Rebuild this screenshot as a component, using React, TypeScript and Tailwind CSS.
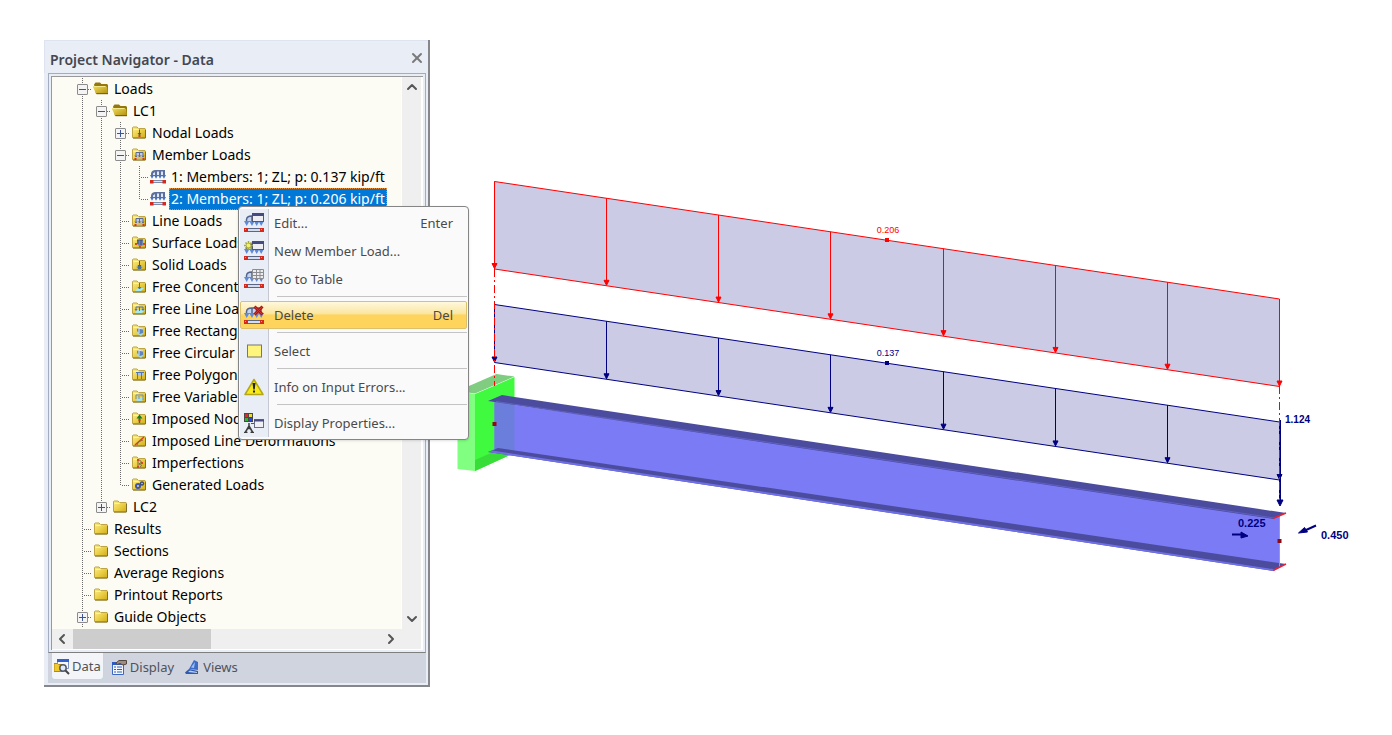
import type { ReactNode } from "react";
import clsx from "clsx";
import { ChevronDown, ChevronLeft, ChevronRight, ChevronUp, X } from "lucide-react";

type Branch = "line" | "end" | "none";

type TreeItem = {
  label: string;
  depth: number;
  icon: string;
  toggle?: "open" | "closed";
  last?: boolean;
  selected?: boolean;
};

const treeItems: TreeItem[] = [
  { label: "Loads", depth: 0, icon: "open", toggle: "open" },
  { label: "LC1", depth: 1, icon: "open", toggle: "open" },
  { label: "Nodal Loads", depth: 2, icon: "nodal", toggle: "closed" },
  { label: "Member Loads", depth: 2, icon: "line", toggle: "open" },
  { label: "1: Members: 1; ZL; p: 0.137 kip/ft", depth: 3, icon: "member" },
  {
    label: "2: Members: 1; ZL; p: 0.206 kip/ft",
    depth: 3,
    icon: "member",
    last: true,
    selected: true,
  },
  { label: "Line Loads", depth: 2, icon: "line" },
  { label: "Surface Loads", depth: 2, icon: "surface" },
  { label: "Solid Loads", depth: 2, icon: "solid" },
  { label: "Free Concentrated Loads", depth: 2, icon: "point" },
  { label: "Free Line Loads", depth: 2, icon: "freeLine" },
  { label: "Free Rectangular Loads", depth: 2, icon: "area" },
  { label: "Free Circular Loads", depth: 2, icon: "area" },
  { label: "Free Polygon Loads", depth: 2, icon: "polygon" },
  { label: "Free Variable Loads", depth: 2, icon: "variable" },
  { label: "Imposed Nodal Deformations", depth: 2, icon: "imposedNode" },
  { label: "Imposed Line Deformations", depth: 2, icon: "imposedLine" },
  { label: "Imperfections", depth: 2, icon: "imperfection" },
  { label: "Generated Loads", depth: 2, icon: "generated", last: true },
  { label: "LC2", depth: 1, icon: "closed", toggle: "closed", last: true },
  { label: "Results", depth: 0, icon: "closed" },
  { label: "Sections", depth: 0, icon: "closed" },
  { label: "Average Regions", depth: 0, icon: "closed" },
  { label: "Printout Reports", depth: 0, icon: "closed" },
  { label: "Guide Objects", depth: 0, icon: "closed", toggle: "closed" },
];

const glyphs: Record<string, ReactNode> = {
  nodal: (
    <>
      <path d="M8.5 4.5v5M7 8l1.5 2L10 8" stroke="#5a5440" fill="none" />
      <rect x="7.500" y="10" width="2" height="2" fill="#d43a1e" />
    </>
  ),
  line: (
    <>
      <path d="M5 5.500h7v4H5z" fill="#c4cad8" />
      <path
        d="M5 10V5.500h7V10M8.500 6v4M4 8.500l1 1.500 1-1.500M7.500 8.500l1 1.500 1-1.500M11 8.500l1 1.500 1-1.500"
        stroke="#5a6c94"
        fill="none"
      />
      <path d="M4 12h9" stroke="#c9b9a0" />
      <path d="M3.500 11h2v2h-2zM11.500 11h2v2h-2z" fill="#e0301c" />
    </>
  ),
  surface: (
    <>
      <path d="M6 5h6v5l-3 2-3-3z" fill="#6f86b0" />
      <path d="M6 5h6M7 5v4M10 5v5" stroke="#3d4f7c" />
      <path d="M4 8h2v2H4zM8 11h2v2H8zM12 8h2v2h-2z" fill="#d8452c" />
    </>
  ),
  solid: (
    <>
      <path d="M5 10l3-2 4 2-3 3z" fill="#8fb4cf" />
      <path d="M8.500 4v5M7 8l1.500 2L10 8" stroke="#3a5478" fill="none" />
      <circle cx="8.500" cy="10.500" r="2" fill="#4c7192" />
    </>
  ),
  point: (
    <>
      <path d="M4 11l3-2h6l-3 3H5z" fill="#a6ecec" />
      <path d="M8.500 4v6M7 8l1.500 2L10 8" stroke="#4a6fa5" fill="none" />
    </>
  ),
  freeLine: (
    <>
      <path d="M4 12l2-3h8l-3 3z" fill="#a6ecec" />
      <path
        d="M5 9V6h7v3M8.500 6v4M4 8l1 1.500L6 8M11 8l1 1.500L13 8"
        stroke="#4b70b5"
        fill="none"
      />
    </>
  ),
  area: (
    <>
      <path d="M5 10l3-2 5 2-3 3z" fill="#a3dbe8" />
      <path d="M6 5l6 1v4l-3 1-3-3z" fill="#5f87bb" />
      <path d="M6 5l6 1M8 6v4" stroke="#dfe9f5" />
    </>
  ),
  polygon: (
    <>
      <path d="M5 5h8l-1 4H6z" fill="#a9c4e6" />
      <path d="M5 5.500h8M6.500 6v6M10.500 6v6" stroke="#5077b4" fill="none" />
    </>
  ),
  variable: (
    <>
      <path d="M5 11l2-3h6l-2 4H6z" fill="#a6e4ec" />
      <path d="M5 6h7v5M5 6v4M8 7v3" stroke="#6a8fb8" fill="none" />
    </>
  ),
  imposedNode: (
    <>
      <path d="M8.500 12V7" stroke="#4a6a20" strokeWidth="1.500" />
      <path d="M5.500 7.500l3-4 3 4z" fill="#157a2a" />
      <rect x="7.500" y="8" width="2" height="2" fill="#e0301c" />
    </>
  ),
  imposedLine: (
    <>
      <path d="M4 12L13 4" stroke="#e23a22" strokeWidth="1.500" />
      <path d="M6 12c1-3 3-4 6-5" stroke="#8c6a3c" fill="none" />
    </>
  ),
  imperfection: (
    <>
      <path d="M7 12V5c4 0 4 3 1 4 3 0 3 2 1 3" stroke="#6a6650" fill="none" />
      <path d="M6 4h2v2H6zM6 11h2v2H6zM10 7h2v2h-2z" fill="#d8452c" />
    </>
  ),
  generated: (
    <>
      <circle cx="7" cy="9" r="3" fill="#3f56b0" />
      <circle cx="11" cy="6.500" r="2.200" fill="#3a4a82" />
      <circle cx="7" cy="9" r="1" fill="#e8d878" />
      <circle cx="11" cy="6.500" r=".8" fill="#e8d878" />
    </>
  ),
};

function TreeIcon({ name }: { name: string }) {
  if (name === "member") {
    return (
      <svg viewBox="0 0 16 16" className="h-4 w-4 shrink-0" aria-hidden="true">
        <path d="M1 5c0-4 4-4 5-4h9v6H1z" fill="#5f6f9c" />
        <path d="M3 7V4.500L5 3v4zM7 2.500h2V7H7zM11 2.500h2V7h-2z" fill="#dbe6f8" />
        <path
          d="M0 6h4.200L2 9.800zM4 6h4.200L6 9.800zM8 6h4.200L10 9.800zM11.800 6H16l-2 3.800z"
          fill="#4a70c4"
        />
        <path d="M3 11.500h10M3 13.500h10" stroke="#7e8aa8" />
        <path d="M3 12.500h10" stroke="#dde4f2" />
        <path d="M0 11h3.500v3.500H0zM12.500 11H16v3.500h-3.500z" fill="#d8281c" />
      </svg>
    );
  }

  if (name === "open") {
    return (
      <svg viewBox="0 0 16 16" className="h-4 w-4 shrink-0" aria-hidden="true">
        <path d="M1 3.500L2.500 1.500H7L8.500 3H14l1 1V13H3z" fill="#94780c" />
        <path d="M-.5 5h13l1.500 1 .8 6.500-.8.500H4l-1-.5z" fill="url(#folder-open)" />
        <path d="M.5 5.500h12" stroke="#f4e88c" />
        <path d="M3.500 12.700H15" stroke="#6e5a08" />
      </svg>
    );
  }

  return (
    <svg viewBox="0 0 16 16" className="h-4 w-4 shrink-0" aria-hidden="true">
      <path
        d="M1.500 2.500l.5-.5h4L7.500 3.500H14l.5.500v8.500l-.5.500H2l-.5-.5z"
        fill="url(#folder)"
        stroke="#bda444"
      />
      <path d="M2.500 4.500H7l1-.5" stroke="#fbf3b4" fill="none" />
      <path d="M2 13h12.500V5" stroke="#80702c" fill="none" />
      {glyphs[name]}
    </svg>
  );
}

const dotsDown = "bg-[repeating-linear-gradient(to_bottom,#6a6a6a_0_1px,transparent_1px_2px)]";
const dotsAcross = "bg-[repeating-linear-gradient(to_right,#6a6a6a_0_1px,transparent_1px_2px)]";

function Connector({ branch, toggle, own }: { branch: Branch; toggle?: string; own?: boolean }) {
  return (
    <span className="relative flex h-[22px] w-[19px] shrink-0 items-start pl-[9px]">
      <span
        className={clsx(
          "w-px shrink-0",
          branch === "line" ? "h-[22px]" : "h-3",
          branch !== "none" && dotsDown
        )}
      />
      {own && <span className={clsx("mt-[11px] ml-px h-px flex-1", dotsAcross)} />}
      {toggle && (
        <button
          type="button"
          aria-label={toggle === "open" ? "Collapse" : "Expand"}
          className="absolute top-[6px] left-1 h-[11px] w-[11px] rounded-[1px] border border-[#8c8c8c] bg-[#f4f4f4]"
        >
          <svg viewBox="0 0 9 9" className="h-[9px] w-[9px]">
            <path
              d={toggle === "open" ? "M1 4.500h7" : "M1 4.500h7M4.500 1v7"}
              stroke="#3d5299"
            />
          </svg>
        </button>
      )}
    </span>
  );
}

function ancestorBranch(index: number, depth: number): Branch {
  for (const item of treeItems.slice(index + 1)) {
    if (item.depth === depth) return "line";
    if (item.depth < depth) return "none";
  }
  return "none";
}

function TreeRow({ item, index }: { item: TreeItem; index: number }) {
  return (
    <li
      role="treeitem"
      aria-level={item.depth + 1}
      aria-selected={!!item.selected}
      className="flex h-[22px] items-center"
    >
      {Array.from({ length: item.depth }, (_, depth) => (
        <Connector key={depth} branch={ancestorBranch(index, depth)} />
      ))}
      <Connector branch={item.last ? "end" : "line"} toggle={item.toggle} own />
      <span className="flex items-center pl-px">
        <TreeIcon name={item.icon} />
        <span
          className={clsx(
            "ml-[3px] border px-px leading-5 whitespace-nowrap",
            item.selected
              ? "border-dotted border-[#e88a30] bg-[#0078d7] text-white"
              : "border-transparent text-black"
          )}
        >
          {item.label}
        </span>
      </span>
    </li>
  );
}

function LoadIcon({ children }: { children?: ReactNode }) {
  return (
    <svg viewBox="0 0 20 20" className="h-5 w-5" aria-hidden="true">
      <path d="M2.500 9V6C3 3 6 3 7.500 3H18v6H2.500z" fill="#c4d4ee" />
      <path
        d="M2.500 10V6.500C3 3 6 3 7.500 3H17v7M8 3.500v7M12.500 4v7"
        stroke="#52648c"
        strokeWidth="1.500"
        fill="none"
      />
      <path
        d="M0 8h5.500L2.700 13zM5.200 8h5.500L8 13zM10 8h5.500l-2.800 5zM14.500 8H20l-2.800 5z"
        fill="#5f8ad8"
      />
      <path d="M3 15.500h14" stroke="#5a6684" />
      <path d="M3 17h14" stroke="#d5dcec" strokeWidth="2" />
      <path d="M3 18.500h14" stroke="#5a6684" />
      <path d="M0 15h4v4H0zM16 15h4v4h-4z" fill="#d8281c" />
      <path d="M1 16h1v1H1zM17 16h1v1h-1z" fill="#ff9080" />
      {children}
    </svg>
  );
}

const windowGlyph = (
  <>
    <rect x="8.500" y=".5" width="11" height="8" fill="#eeeef2" stroke="#55586c" />
    <path d="M8 1.500h12" stroke="#454a80" strokeWidth="3" />
  </>
);

type MenuEntry = { label: string; shortcut?: string; icon: ReactNode; active?: boolean };

const menuGroups: MenuEntry[][] = [
  [
    { label: "Edit...", shortcut: "Enter", icon: <LoadIcon>{windowGlyph}</LoadIcon> },
    {
      label: "New Member Load...",
      icon: (
        <LoadIcon>
          {windowGlyph}
          <path
            d="M4.500 0v9M0 4.500h9M1.500 1.500l6 6M7.500 1.500l-6 6"
            stroke="#a8aa28"
            strokeWidth="1.500"
          />
          <circle cx="4.500" cy="4.500" r="2" fill="#f4ee70" />
        </LoadIcon>
      ),
    },
    {
      label: "Go to Table",
      icon: (
        <LoadIcon>
          <path
            d="M8.500.5h11v9h-11zM8.500 3.500h11M8.500 6.500h11M12.500.5v9M16 .5v9"
            fill="#ececec"
            stroke="#8c8c92"
          />
        </LoadIcon>
      ),
    },
  ],
  [
    {
      label: "Delete",
      shortcut: "Del",
      active: true,
      icon: (
        <LoadIcon>
          <path d="M10.500 1.500l8 8M18.500 1.500l-8 8" stroke="#a81818" strokeWidth="3" />
          <path d="M11 2l7 7M18 2l-7 7" stroke="#d83228" />
        </LoadIcon>
      ),
    },
  ],
  [
    {
      label: "Select",
      icon: (
        <svg viewBox="0 0 20 20" className="h-5 w-5" aria-hidden="true">
          <rect x="3.500" y="4" width="14" height="12" fill="#fff47c" stroke="#77776a" />
        </svg>
      ),
    },
  ],
  [
    {
      label: "Info on Input Errors...",
      icon: (
        <svg viewBox="0 0 20 20" className="h-5 w-5" aria-hidden="true">
          <path
            d="M10 2.500L19 17.500H1z"
            fill="#f8ea18"
            stroke="#b5a818"
            strokeWidth="1.500"
            strokeLinejoin="round"
          />
          <path d="M8.500 6h3l-.8 6.500H9.300zM9 13.500h2v2H9z" fill="#222" />
        </svg>
      ),
    },
  ],
  [
    {
      label: "Display Properties...",
      icon: (
        <svg viewBox="0 0 20 20" className="h-5 w-5" aria-hidden="true">
          <path d="M0 0h9v9H0z" fill="#484848" />
          <path d="M1 1h3v3H1z" fill="#e02828" />
          <path d="M5 1h3v3H5z" fill="#e8e020" />
          <path d="M1 5h3v3H1z" fill="#28b830" />
          <path d="M5 5h3v3H5z" fill="#2848e0" />
          <path
            d="M5 10v3L1.500 19M5 13l3.500 6M3.500 15.500h3M0 19.500h3.500M6.500 19.500H10"
            stroke="#3c3c3c"
            fill="none"
            strokeWidth="1.500"
          />
          <path d="M7 10.500h4" stroke="#555" />
          <rect x="10.500" y="6.500" width="9" height="8" fill="#f0f0f4" stroke="#6a6c80" />
          <path d="M10 7.500h10" stroke="#484c80" strokeWidth="2" />
        </svg>
      ),
    },
  ],
];

function ContextMenu() {
  return (
    <div
      role="menu"
      className="absolute top-[166px] left-[194px] z-10 w-[231px] rounded-sm border border-[#858585] bg-[#fafafa] px-px py-0.5 shadow-sm"
    >
      {menuGroups.map((group, index) => (
        <div key={index}>
          {index > 0 && (
            <div role="separator" className="flex h-2">
              <span className="w-[29px] border-r border-[#c5c8d0] bg-[#e9edf6]" />
              <span className="mt-[3px] ml-2 h-px flex-1 bg-[#c4c4c4]" />
            </div>
          )}
          {group.map((entry) => (
            <button
              key={entry.label}
              type="button"
              role="menuitem"
              className={clsx(
                "flex h-7 w-full items-center text-left text-[13px] text-[#4a4a4a]",
                entry.active
                  ? "rounded-xs border border-[#dcc06c] bg-linear-to-b from-[#fef8dc] from-0% via-[#fbe6a0] via-45% to-[#ffd45c] to-50% pr-[13px]"
                  : "pr-3.5"
              )}
            >
              <span
                className={clsx(
                  "flex h-full items-center",
                  entry.active
                    ? "w-7 pl-[3px]"
                    : "w-[29px] border-r border-[#c5c8d0] bg-[#e9edf6] pl-1"
                )}
              >
                {entry.icon}
              </span>
              <span className="ml-[5px] flex-1 pt-0.5 whitespace-nowrap">{entry.label}</span>
              <span className="pt-0.5">{entry.shortcut}</span>
            </button>
          ))}
        </div>
      ))}
    </div>
  );
}

function NavigatorTabs() {
  return (
    <nav className="flex h-[30px] items-start gap-1 bg-[#cfd4df] pl-[3px] text-[13px] text-[#50525c]">
      <button
        type="button"
        className="flex h-[27px] items-center gap-0.5 rounded-b-sm border border-t-0 border-[#b9dcdc] bg-[#f3f5f8] px-0.5 pt-px"
      >
        <svg viewBox="0 0 16 16" className="h-4 w-4" aria-hidden="true">
          <path d="M3.500 1.500h11v8h-11z" fill="#f6f8fc" stroke="#7d92c0" />
          <path d="M3 1.500h12" stroke="#2f62d0" strokeWidth="3" />
          <path d="M0 4.500h3.500l1 1h4v7H0z" fill="#f0c92c" stroke="#b08a14" />
          <circle cx="9" cy="9" r="3.200" fill="#dcecf8" stroke="#555b66" strokeWidth="1.500" />
          <path d="M11.500 11.500l3.500 3.500" stroke="#444" strokeWidth="2" />
        </svg>
        Data
      </button>
      <button type="button" className="flex h-[29px] items-center gap-[3px] px-[3px]">
        <svg viewBox="0 0 16 16" className="h-4 w-4" aria-hidden="true">
          <path d="M1.500 2.500h11v12h-11z" fill="#f2f6fd" stroke="#3c66c0" />
          <path d="M1 3.500h12" stroke="#2c59c4" strokeWidth="3" />
          <path
            d="M3 7h2M6 7h5M3 9.500h2M6 9.500h5M3 12h2M6 12h5"
            stroke="#3560b8"
          />
          <path d="M5 3l3-2.500h7.500V4l-3.500 1-3-1.500-3 1z" fill="#a08c80" stroke="#54483f" />
        </svg>
        Display
      </button>
      <button type="button" className="flex h-[29px] items-center gap-[3px] px-[3px]">
        <svg viewBox="0 0 16 16" className="h-4 w-4" aria-hidden="true">
          <path d="M10 0l4 2v8L5 9z" fill="#3c6cc8" />
          <path d="M11 2l-1 6-3-.5z" fill="#9cc0f0" />
          <path d="M1 12.500L5 9l9 2v3H2z" fill="#2f58b0" />
          <path d="M4 12l2-1.500 7 1.500v1z" fill="#b8d0f4" />
        </svg>
        Views
      </button>
    </nav>
  );
}

function ProjectNavigator() {
  const arrow = "flex h-5 w-5 items-center justify-center text-[#555]";
  return (
    <section className="relative mt-10 ml-11 w-[386px] shrink-0 border-r-2 border-b-2 border-[#85878c] bg-[#e9edf6]">
      <header className="flex h-[33px] items-center justify-between border-t border-l border-[#dde4f0] pr-[3px] pl-[5px]">
        <h1 className="pt-1 text-[14px] font-semibold text-[#454750]">Project Navigator - Data</h1>
        <button type="button" aria-label="Close" className="pt-0.5 text-[#7a7a7a]">
          <X size={16} strokeWidth={3} />
        </button>
      </header>

      <div className="mr-0.5 mb-0.5 ml-1">
        <div className="border border-[#a3adbf] border-b-[#7f7f7f] p-0.5">
          <div className="border-t border-l border-[#999] bg-white pr-0.5 pb-px">
            <div className="flex bg-[#efefef]">
              <ul
                role="tree"
                className="min-w-0 flex-1 overflow-hidden bg-[#fcfcf4] py-px pl-[21px] text-[14px]"
              >
                {treeItems.map((item, index) => (
                  <TreeRow key={item.label} item={item} index={index} />
                ))}
              </ul>
              <div className="flex w-5 flex-col justify-between border-l border-white">
                <button type="button" aria-label="Scroll up" className={arrow}>
                  <ChevronUp size={16} strokeWidth={3} />
                </button>
                <button type="button" aria-label="Scroll down" className={arrow}>
                  <ChevronDown size={16} strokeWidth={3} />
                </button>
              </div>
            </div>
            <div className="flex bg-[#efefef] pr-5">
              <button type="button" aria-label="Scroll left" className={arrow}>
                <ChevronLeft size={16} strokeWidth={3} />
              </button>
              <div className="flex-1 px-px">
                <div className="h-5 w-[138px] bg-[#cdcdcd]" />
              </div>
              <button type="button" aria-label="Scroll right" className={arrow}>
                <ChevronRight size={16} strokeWidth={3} />
              </button>
            </div>
          </div>
        </div>
        <NavigatorTabs />
      </div>

      <ContextMenu />
    </section>
  );
}

const arrowSteps = [0, 1, 2, 3, 4, 5, 6, 7];

function DistributedLoad({ top, height, color }: { top: number; height: number; color: string }) {
  const left = 494.5;
  const right = 1279.5;
  const drop = 117.5;
  return (
    <g stroke={color} fill={color}>
      <path
        d={`M${left} ${top}L${right} ${top + drop}V${top + drop + height}L${left} ${top + height}z`}
        fill="#cbcbe6"
      />
      {arrowSteps.map((step) => {
        const x = Math.floor(left + (step * (right - left)) / 7) + 0.5;
        const y = top + (step * drop) / 7;
        const tip = y + height;
        return (
          <g key={step}>
            <path d={`M${x} ${y}V${tip - 5}`} />
            <path d={`M${x - 2.5} ${tip - 5.5}h5L${x} ${tip - 0.5}z`} />
          </g>
        );
      })}
      <rect x="885" y={top + 56.5} width="4" height="4" stroke="none" />
    </g>
  );
}

function ModelView() {
  return (
    <svg
      viewBox="430 0 962 735"
      className="min-w-0 flex-1"
      role="img"
      aria-label="Cantilever beam with member loads"
      fontFamily="'Liberation Sans', sans-serif"
    >
      <defs>
        <linearGradient id="folder" x1="0" y1="0" x2="1" y2="1">
          <stop offset="0" stopColor="#faee90" />
          <stop offset=".5" stopColor="#ecd048" />
          <stop offset="1" stopColor="#d0ac18" />
        </linearGradient>
        <linearGradient id="folder-open" x1="0" y1="0" x2="1" y2="1">
          <stop offset="0" stopColor="#f4e060" />
          <stop offset="1" stopColor="#b08e0c" />
        </linearGradient>
      </defs>

      {/* support block */}
      <path d="M457.500 391l17.500 3v77l-17.500-2z" fill="#80ff80" />
      <path d="M457.500 391l39-17 18 2.500-39.500 17z" fill="#80cc80" />
      <path d="M475 394l39.500-17v76L475 471z" fill="#40fa40" />
      <path d="M475 460l25-11 14.500 3.500V453L475 471z" fill="#38de38" />

      {/* beam */}
      <path d="M494.500 402L1279.500 517v50L494.500 449z" fill="#7b7bf6" />
      <path d="M494.500 402l20 3v46l-20-2z" fill="#6c7edc" />
      <path d="M488 401l14-6 784 118-13 6z" fill="#4c4c9e" />
      <path d="M496 401.500l778 116.500" stroke="#6060c4" />
      <path d="M488 452l10-4L1286 564l-13 7z" fill="#4c4c9e" />
      <path d="M488 452l785 119 3-1.500L492 450.500z" fill="#7070e6" />
      <path d="M1279.500 516v51" stroke="#e878a0" />
      <path
        d="M1273 518.500l13-5.500M1273 570.500l13-6.500"
        stroke="#f02030"
        strokeWidth="1.500"
      />
      <path d="M492.500 422h4v4h-4zM1277.500 539h4v4h-4z" fill="#8c0a14" />

      <DistributedLoad top={181.5} height={87.5} color="#f00" />
      <DistributedLoad top={304.5} height={58} color="#000080" />

      {/* nodal forces */}
      <g stroke="#000080" fill="#000080">
        <path d="M1280 420v82" strokeWidth="2" />
        <path d="M1277 500h6l-3 6z" />
        <path d="M1232 534.500h10M1316 525.500l-11 5" strokeWidth="2" />
        <path d="M1241 532l7 4-7 2z" />
        <path d="M1298.500 533l6-5.500 3 4.500z" />
      </g>
      <path d="M494.500 269v117M1279.500 386v114" stroke="#f00" strokeDasharray="8 3 2 3" />

      <g fontSize="9" textAnchor="middle">
        <text x="888" y="233" fill="#f00">0.206</text>
        <text x="888" y="356" fill="#000080">0.137</text>
      </g>
      <g fontSize="11" fontWeight="bold" fill="#000080">
        <text x="1285" y="423" fontSize="10">1.124</text>
        <text x="1238" y="527">0.225</text>
        <text x="1321" y="539">0.450</text>
      </g>
    </svg>
  );
}

export default function App() {
  return (
    <main className="flex min-h-screen items-start bg-white font-['Noto_Sans',sans-serif]">
      <ProjectNavigator />
      <ModelView />
    </main>
  );
}
